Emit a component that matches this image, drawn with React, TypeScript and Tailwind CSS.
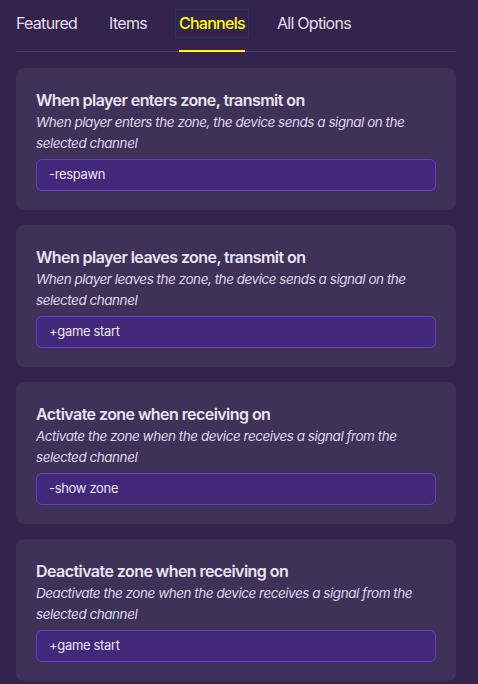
const tabs = ['Featured', 'Items', 'Channels', 'All Options']

const options = [
    {
        title: 'When player enters zone, transmit on',
        desc: 'When player enters the zone, the device sends a signal on the selected channel',
        value: '-respawn',
    },
    {
        title: 'When player leaves zone, transmit on',
        desc: 'When player leaves the zone, the device sends a signal on the selected channel',
        value: '+game start',
    },
    {
        title: 'Activate zone when receiving on',
        desc: 'Activate the zone when the device receives a signal from the selected channel',
        value: '-show zone',
    },
    {
        title: 'Deactivate zone when receiving on',
        desc: 'Deactivate the zone when the device receives a signal from the selected channel',
        value: '+game start',
    },
]

const App = () => {
    return (
        <div className="w-[478px] h-[684px] overflow-hidden bg-[#33234d] text-[#e6e2ef] font-['Inter',sans-serif]">
            <div className="ml-4 w-[440px]">
                {/* Tabs */}
                <div className="flex gap-8 border-b border-[#4f3a84]">
                    {tabs.map((t) => (
                        <div
                            key={t}
                            className={`relative pt-[11px] pb-[15px] text-[16px] leading-6 tracking-[-0.045em] -mb-px ${t === 'Channels' ? 'text-[#ffff00] font-medium border-b-2 border-[#ffff00]' : 'text-[#e2dfea] border-b-2 border-transparent'
                                }`}
                        >
                            {t === 'Channels' && (
                                <div className="absolute -left-[4px] -right-[4px] top-[9px] h-[29px] border border-[#1d3a5e]" />
                            )}
                            {t}
                        </div>
                    ))}
                </div>

                {/* Option cards */}
                <div className="flex flex-col gap-[15px] mt-4">
                    {options.map((o) => (
                        <div key={o.title} className="rounded-lg bg-[#3f3259] px-5 pt-5 pb-[19px]">
                            <div className="text-[16px] leading-6 font-semibold tracking-[-0.035em] text-[#e8e4f0]">{o.title}</div>
                            <div className="text-[13.5px] leading-[21px] italic tracking-[-0.035em] text-[#ddd8e8]">{o.desc}</div>
                            <div className="mt-[5px] h-[32px] rounded-md border border-[#6a40c6] bg-[#43277a] px-3 flex items-center text-[13px] tracking-[-0.025em] text-[#e8e4f0]">
                                {o.value}
                            </div>
                        </div>
                    ))}
                </div>
            </div>
        </div>
    )
}

export default App
